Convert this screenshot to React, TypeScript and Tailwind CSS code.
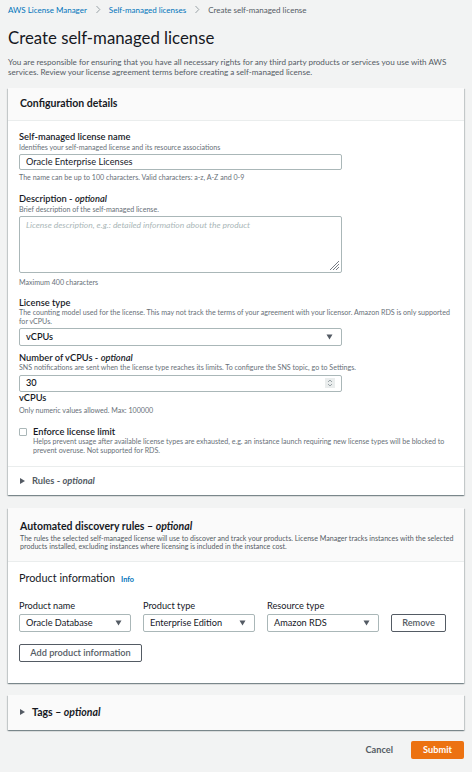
import React from "react";

const Caret = () => (
  <svg width="7" height="6" viewBox="0 0 7 6" className="shrink-0">
    <path d="M0.5 0.5 H6.5 L3.5 5.5 Z" fill="#545b64" />
  </svg>
);

const Tri = () => (
  <svg width="5" height="6" viewBox="0 0 5 6" className="shrink-0">
    <path d="M0 0 L5 3 L0 6 Z" fill="#545b64" />
  </svg>
);

const Chev = () => (
  <svg width="6" height="9" viewBox="0 0 6 9" className="shrink-0">
    <path d="M1.5 1 L4.8 4.5 L1.5 8" stroke="#879196" strokeWidth="0.8" fill="none" />
  </svg>
);

function Select({ value }: { value: string }) {
  return (
    <div className="w-full h-[18px] border border-[#aab7b8] rounded-[2px] bg-white flex items-center justify-between pl-[6px] pr-[8px] text-[9.2px] text-[#16191f]">
      <span>{value}</span>
      <Caret />
    </div>
  );
}

const cardShadow =
  "shadow-[0_1px_1px_0_rgba(0,28,36,0.3),1px_1px_1px_0_rgba(0,28,36,0.15),-1px_1px_1px_0_rgba(0,28,36,0.15)]";

const label = "text-[9.3px] leading-[10px] font-semibold whitespace-nowrap";
const small = "text-[7.1px] leading-[9px] text-[#687078] whitespace-nowrap";

export default function App() {
  return (
    <div
      className="w-[472px] h-[772px] bg-[#f2f3f3] text-[#16191f] overflow-hidden"
      style={{ fontFamily: 'Lato, "Open Sans", sans-serif' }}
    >
      <div className="px-[8px]">
        {/* breadcrumb */}
        <div className="h-[19px] flex items-center gap-[8px] text-[8px]">
          <span className="text-[#0073bb]">AWS License Manager</span>
          <Chev />
          <span className="text-[#0073bb]">Self-managed licenses</span>
          <Chev />
          <span className="text-[#545b64]">Create self-managed license</span>
        </div>
        <h1 className="text-[16.8px] leading-[22px] mt-[8px] font-normal">Create self-managed license</h1>
        <p className="text-[8.1px] leading-[10px] text-[#545b64] mt-[8px] whitespace-nowrap">
          You are responsible for ensuring that you have all necessary rights for any third party products or services you use with AWS
          <br />
          services. Review your license agreement terms before creating a self-managed license.
        </p>

        {/* Configuration card */}
        <div className={`mt-[11px] bg-white ${cardShadow}`}>
          <div className="h-[33px] bg-[#fafafa] border-b border-[#eaeded] flex items-center px-[12px]">
            <h2 className="text-[10.5px] font-bold">Configuration details</h2>
          </div>
          <div className="px-[11px] pt-[11px] pb-[10.5px]">
            <div className={label}>Self-managed license name</div>
            <div className={`${small} mt-[0.5px]`}>Identifies your self-managed license and its resource associations</div>
            <div className="mt-[2.5px] w-[323px] h-[16px] border border-[#aab7b8] rounded-[2px] flex items-center px-[6px] text-[9.2px]">Oracle Enterprise Licenses</div>
            <div className={`mt-[3px] ${small}`}>The name can be up to 100 characters. Valid characters: a-z, A-Z and 0-9</div>

            <div className={`mt-[12px] ${label}`}>Description - <i>optional</i></div>
            <div className={`${small} mt-[0.5px]`}>Brief description of the self-managed license.</div>
            <div className="relative mt-[2.5px] w-[323px] h-[57px] border border-[#aab7b8] rounded-[2px] px-[6px] pt-[2px] text-[8.5px] italic text-[#aab7b8] whitespace-nowrap">
              License description, e.g.: detailed information about the product
              <svg width="12" height="12" viewBox="0 0 12 12" className="absolute right-[1px] bottom-[1px]">
                <path d="M11 2 L2 11 M11 5 L5 11 M11 8 L8 11" stroke="#545b64" strokeWidth="0.8" />
              </svg>
            </div>
            <div className={`mt-[4.5px] ${small}`}>Maximum 400 characters</div>

            <div className={`mt-[11px] ${label}`}>License type</div>
            <div className={small}>
              The counting model used for the license. This may not track the terms of your agreement with your licensor. Amazon RDS is only supported
              <br />
              for vCPUs.
            </div>
            <div className="mt-[2px] w-[323px] h-[18px] border border-[#aab7b8] rounded-[2px] flex items-center justify-between pl-[6px] pr-[8px] text-[9.2px] font-semibold">
              <span>vCPUs</span>
              <Caret />
            </div>

            <div className={`mt-[7px] ${label}`}>Number of vCPUs - <i>optional</i></div>
            <div className={`${small} mt-[0.5px]`}>SNS notifications are sent when the license type reaches its limits. To configure the SNS topic, go to Settings.</div>
            <div className="mt-[2.5px] w-[323px] h-[17px] border border-[#aab7b8] rounded-[2px] flex items-center justify-between pl-[6px] pr-[6px] text-[9.2px] font-semibold">
              <span>30</span>
              <div className="w-[10px] h-[10px] bg-[#eaeded] flex items-center justify-center">
                <svg width="6" height="8" viewBox="0 0 6 8">
                  <path d="M1 3 L3 1 L5 3 M1 5 L3 7 L5 5" stroke="#879196" strokeWidth="0.8" fill="none" />
                </svg>
              </div>
            </div>
            <div className={`mt-[1px] ${label}`}>vCPUs</div>
            <div className={`mt-[3.5px] ${small}`}>Only numeric values allowed. Max: 100000</div>

            <div className="mt-[11.5px] flex gap-[6.5px]">
              <div className="mt-[1.5px] w-[7.5px] h-[7.5px] border border-[#aab7b8] rounded-[1px] bg-white shrink-0" />
              <div>
                <div className={label}>Enforce license limit</div>
                <div className={`${small} mt-[0.5px]`}>
                  Helps prevent usage after available license types are exhausted, e.g. an instance launch requiring new license types will be blocked to
                  <br />
                  prevent overuse. Not supported for RDS.
                </div>
              </div>
            </div>
          </div>
          <div className="border-t border-[#eaeded] h-[29px] flex items-center gap-[7px] px-[12px]">
            <Tri />
            <span className="text-[9.3px] font-bold text-[#545b64]">Rules - <i>optional</i></span>
          </div>
        </div>

        {/* Automated discovery card */}
        <div className={`mt-[13px] bg-white ${cardShadow}`}>
          <div className="bg-[#fafafa] border-b border-[#eaeded] px-[12px] pt-[12px] pb-[10.5px]">
            <h2 className="text-[10.5px] leading-[12px] font-bold">Automated discovery rules – <i>optional</i></h2>
            <div className="mt-[3px] text-[7.1px] leading-[8px] text-[#545b64] whitespace-nowrap">
              The rules the selected self-managed license will use to discover and track your products. License Manager tracks instances with the selected
              <br />
              products installed, excluding instances where licensing is included in the instance cost.
            </div>
          </div>
          <div className="px-[11px] pt-[9px] pb-[21px]">
            <div className="flex items-baseline gap-[6px]">
              <span className="text-[10.9px] leading-[14px]">Product information</span>
              <span className="text-[7.3px] font-bold text-[#0073bb]">Info</span>
            </div>
            <div className="mt-[14.5px] flex items-end">
              <div className="w-[112px]">
                <div className="text-[9.2px] leading-[11px] mb-[2.5px]">Product name</div>
                <Select value="Oracle Database" />
              </div>
              <div className="w-[112px] ml-[12px]">
                <div className="text-[9.2px] leading-[11px] mb-[2.5px]">Product type</div>
                <Select value="Enterprise Edition" />
              </div>
              <div className="w-[112px] ml-[12px]">
                <div className="text-[9.2px] leading-[11px] mb-[2.5px]">Resource type</div>
                <Select value="Amazon RDS" />
              </div>
              <div className="ml-[12px] w-[55px] h-[18px] border border-[#545b64] rounded-[2px] flex items-center justify-center text-[9.2px] font-semibold text-[#545b64]">Remove</div>
            </div>
            <div className="mt-[12px] w-[123px] h-[18px] border border-[#545b64] rounded-[2px] flex items-center justify-center text-[9.2px] font-semibold text-[#545b64]">Add product information</div>
          </div>
        </div>

        {/* Tags */}
        <div className={`mt-[12px] h-[35px] bg-[#fafafa] ${cardShadow} flex items-center gap-[7px] px-[12px]`}>
          <Tri />
          <span className="text-[10.5px] font-bold">Tags – <i>optional</i></span>
        </div>

        {/* Footer */}
        <div className="mt-[11px] flex justify-end items-center gap-[18px]">
          <span className="text-[9.2px] font-bold text-[#545b64]">Cancel</span>
          <div className="w-[53px] h-[18px] bg-[#ec7211] rounded-[2px] flex items-center justify-center text-[9.2px] font-bold text-white">Submit</div>
        </div>
      </div>
    </div>
  );
}
